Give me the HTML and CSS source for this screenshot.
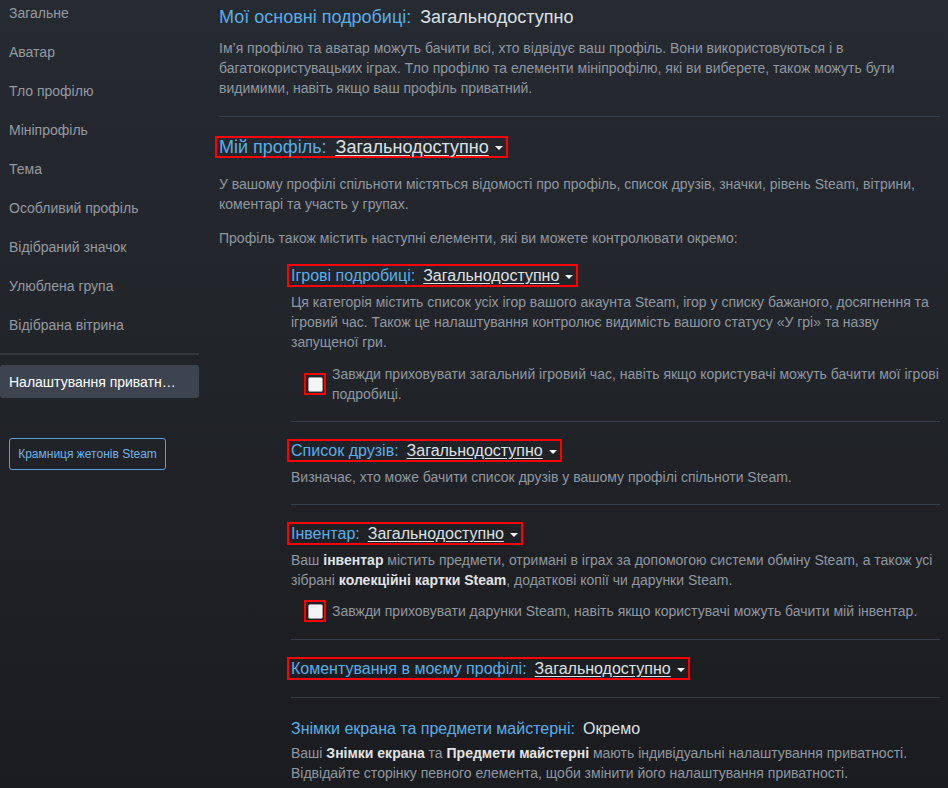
FILE: index.html
```html
<!DOCTYPE html>
<html lang="uk">
<head>
<meta charset="utf-8">
<title>Налаштування приватності</title>
<link rel="stylesheet" href="styles.css">
</head>
<body>
<div class="page">
  <nav class="side">
    <a class="side-item">Загальне</a>
    <a class="side-item">Аватар</a>
    <a class="side-item">Тло профілю</a>
    <a class="side-item">Мініпрофіль</a>
    <a class="side-item">Тема</a>
    <a class="side-item">Особливий профіль</a>
    <a class="side-item">Відібраний значок</a>
    <a class="side-item">Улюблена група</a>
    <a class="side-item">Відібрана вітрина</a>
    <div class="side-sep"></div>
    <a class="side-active">Налаштування приватності</a>
    <a class="token-btn">Крамниця жетонів Steam</a>
  </nav>

  <main class="main">
    <div class="title"><span class="lbl">Мої основні подробиці:</span><span class="val-plain">Загальнодоступно</span></div>
    <p class="desc top-desc">Ім’я профілю та аватар можуть бачити всі, хто відвідує ваш профіль. Вони використовуються і в багатокористувацьких іграх. Тло профілю та елементи мініпрофілю, які ви виберете, також можуть бути видимими, навіть якщо ваш профіль приватний.</p>
    <div class="rule main-rule"></div>

    <div class="hl hl-main"><span class="lbl">Мій профіль:</span><span class="val">Загальнодоступно</span><span class="caret"></span></div>
    <p class="desc p1">У вашому профілі спільноти містяться відомості про профіль, список друзів, значки, рівень Steam, вітрини, коментарі та участь у групах.</p>
    <p class="desc p2">Профіль також містить наступні елементи, які ви можете контролювати окремо:</p>

    <div class="subs">
      <div class="hl hl-sub"><span class="lbl">Ігрові подробиці:</span><span class="val">Загальнодоступно</span><span class="caret"></span></div>
      <p class="desc sub-desc">Ця категорія містить список усіх ігор вашого акаунта Steam, ігор у списку бажаного, досягнення та ігровий час. Також це налаштування контролює видимість вашого статусу «У грі» та назву запущеної гри.</p>
      <label class="check-row">
        <span class="cb-hl"><span class="cb"></span></span>
        <span class="check-text">Завжди приховувати загальний ігровий час, навіть якщо користувачі можуть бачити мої ігрові подробиці.</span>
      </label>

      <div class="rule sub-rule"></div>

      <div class="hl hl-sub"><span class="lbl">Список друзів:</span><span class="val">Загальнодоступно</span><span class="caret"></span></div>
      <p class="desc sub-desc">Визначає, хто може бачити список друзів у вашому профілі спільноти Steam.</p>

      <div class="rule sub-rule"></div>

      <div class="hl hl-sub"><span class="lbl">Інвентар:</span><span class="val">Загальнодоступно</span><span class="caret"></span></div>
      <p class="desc sub-desc">Ваш <b>інвентар</b> містить предмети, отримані в іграх за допомогою системи обміну Steam, а також усі зібрані <b>колекційні картки Steam</b>, додаткові копії чи дарунки Steam.</p>
      <label class="check-row check-row-2">
        <span class="cb-hl"><span class="cb"></span></span>
        <span class="check-text">Завжди приховувати дарунки Steam, навіть якщо користувачі можуть бачити мій інвентар.</span>
      </label>

      <div class="rule sub-rule"></div>

      <div class="hl hl-sub"><span class="lbl">Коментування в моєму профілі:</span><span class="val">Загальнодоступно</span><span class="caret"></span></div>

      <div class="rule sub-rule"></div>

      <div class="sub-title"><span class="lbl">Знімки екрана та предмети майстерні:</span><span class="val-plain">Окремо</span></div>
      <p class="desc shots-desc">Ваші <b>Знімки екрана</b> та <b>Предмети майстерні</b> мають індивідуальні налаштування приватності. Відвідайте сторінку певного елемента, щоби змінити його налаштування приватності.</p>
    </div>
  </main>
</div>
</body>
</html>
```

FILE: styles.css
```css
html, body {
  margin: 0;
  padding: 0;
}
body {
  width: 948px;
  height: 788px;
  overflow: hidden;
  background: linear-gradient(to bottom, #262a31 0%, #212429 45%, #1b1c1f 100%);
  font-family: "Liberation Sans", Arial, sans-serif;
  color: #8f98a0;
}
.page {
  display: flex;
  align-items: flex-start;
}

/* sidebar */
.side {
  width: 199px;
  flex: 0 0 199px;
  display: flex;
  flex-direction: column;
}
.side-item {
  display: block;
  font-size: 14px;
  line-height: 20px;
  padding: 3px 9px 16px;
  color: #949aa1;
}
.side-sep {
  height: 2px;
  margin-top: 2px;
  background: #34383e;
}
.side-active {
  display: block;
  margin-top: 10px;
  padding: 7px 22px 6px 9px;
  font-size: 14px;
  line-height: 20px;
  color: #ffffff;
  background: #3d4450;
  border-radius: 3px;
  white-space: nowrap;
  overflow: hidden;
  text-overflow: ellipsis;
}
.token-btn {
  align-self: flex-start;
  margin: 40px 0 0 9px;
  width: 155px;
  height: 30px;
  box-sizing: content-box;
  border: 1px solid #5b9fd6;
  border-radius: 3px;
  font-size: 12px;
  line-height: 30px;
  text-align: center;
  color: #72b4e8;
}

/* main */
.main {
  flex: 1;
  margin-left: 20px;
  padding: 6px 8px 0 0;
}
.lbl {
  color: #5aaee8;
}
.val-plain {
  color: #dde1e4;
  margin-left: 9px;
}
.title {
  font-size: 18px;
  line-height: 22px;
}
.desc {
  margin: 0;
  font-size: 14px;
  line-height: 20px;
  color: #8f98a0;
}
.desc b {
  color: #e1e4e7;
  font-weight: bold;
}
.top-desc {
  margin-top: 10px;
}
.rule {
  height: 1px;
  background: #35404c;
}
.main-rule {
  margin-top: 18px;
}

/* highlighted dropdowns */
.hl {
  display: inline-flex;
  align-items: center;
  align-self: flex-start;
  border: 2px solid #ff0000;
  padding: 0 3px 0 2px;
  margin-left: -4px;
  white-space: nowrap;
}
.hl-main {
  font-size: 18px;
  line-height: 18px;
  margin-top: 19px;
}
.hl-sub {
  font-size: 16px;
  line-height: 19px;
}
.val {
  color: #dde1e4;
  text-decoration: underline;
  text-underline-offset: 2px;
  margin-left: 9px;
}
.hl-sub .val {
  margin-left: 8px;
}
.caret {
  width: 0;
  height: 0;
  margin-left: 6px;
  margin-top: 2px;
  border-left: 4px solid transparent;
  border-right: 4px solid transparent;
  border-top: 4px solid #ffffff;
}
.p1 {
  margin-top: 16px;
}
.p2 {
  margin-top: 14px;
}

/* sub section */
.subs {
  display: flex;
  flex-direction: column;
  margin-left: 72px;
  margin-top: 16px;
}
.sub-desc {
  margin-top: 5px;
}
.check-row {
  display: flex;
  align-items: center;
  margin-top: 12px;
  padding-left: 13px;
}
.check-row-2 {
  margin-top: 10px;
}
.cb-hl {
  flex: 0 0 auto;
  border: 2px solid #ff0000;
  padding: 2px 1px 1px 2px;
  line-height: 0;
}
.cb {
  display: block;
  width: 13px;
  height: 13px;
  background: #f4f4f4;
  border: 1px solid #9a9a9a;
  border-radius: 2px;
}
.check-text {
  margin-left: 6px;
  font-size: 14px;
  line-height: 20px;
  color: #8f98a0;
}
.sub-rule {
  margin: 17px 0;
}
.sub-title {
  font-size: 16px;
  line-height: 20px;
  margin-top: 4px;
}
.sub-title .val-plain {
  margin-left: 8px;
}
.shots-desc {
  margin-top: 4px;
}
```
